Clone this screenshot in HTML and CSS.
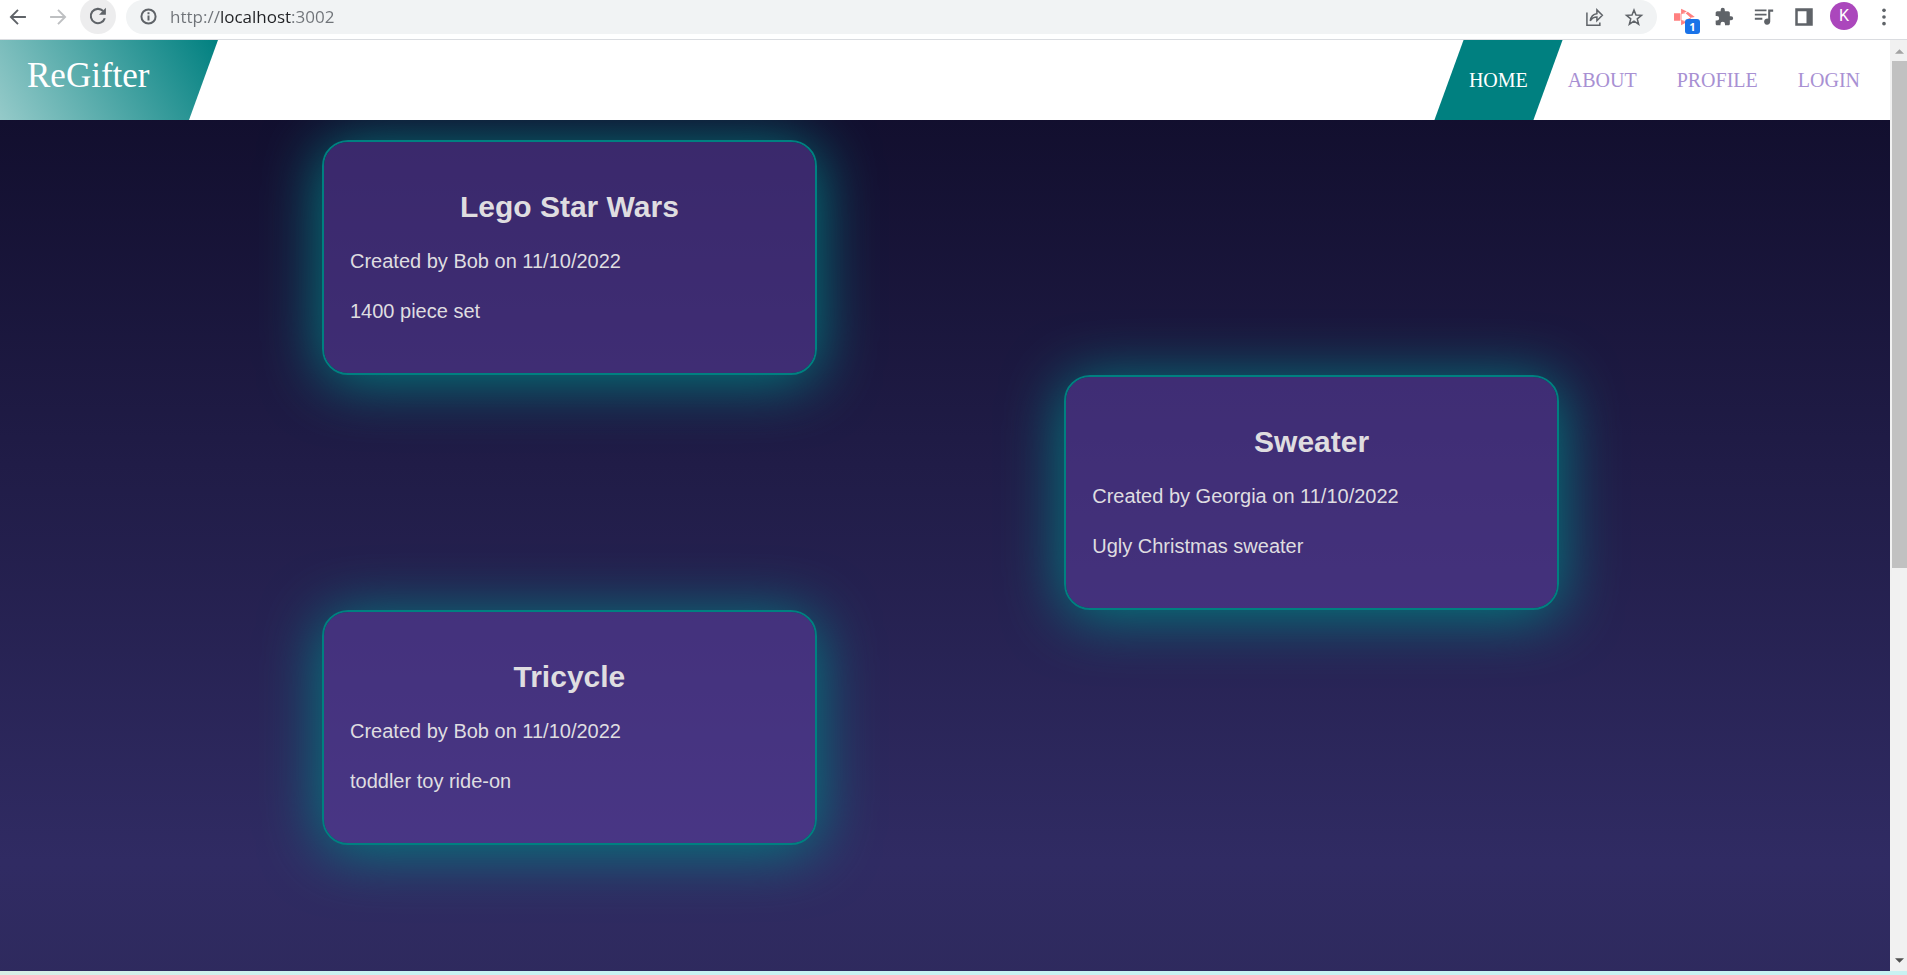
FILE: index.html
```
<!DOCTYPE html>
<html lang="en">
<head>
<meta charset="utf-8">
<title>ReGifter</title>
<link rel="stylesheet" href="styles.css">
</head>
<body>
<div class="toolbar">
  <div class="nav-buttons">
    <button class="tool" aria-label="Back"><svg viewBox="0 0 24 24"><path d="M21.500 12H4M12 3.500 3.500 12l8.500 8.500" class="line"/></svg></button>
    <button class="tool tool-off" aria-label="Forward"><svg viewBox="0 0 24 24"><path d="M2.500 12H20M12 3.500 20.500 12 12 20.500" class="line"/></svg></button>
    <button class="tool tool-round" aria-label="Reload"><svg viewBox="0 0 24 24"><path d="M19.400 14.400A7.800 7.800 0 1 1 17.600 6.600" class="line"/><path d="M20.600 3v7.500h-7.500z"/></svg></button>
  </div>
  <div class="address">
    <button class="tool tool-small" aria-label="Site information"><svg viewBox="0 0 24 24"><circle cx="12" cy="12" r="10" class="line thick"/><path d="M10.600 10.500h2.800V17.500h-2.800zM10.600 6h2.800v2.800h-2.800z"/></svg></button>
    <input class="url" type="text" aria-label="Address" value="http://localhost:3002">
    <button class="tool" aria-label="Share"><svg viewBox="0 0 24 24"><path d="M3.500 6.500v15.500H19V18.500" class="line thin"/><path d="M7.500 16.500C8.300 11 11 8.500 15.500 8V3.500l6.500 6.500-6.500 6.500v-4.500C12 12 9.500 13.500 7.500 16.500z" class="line thin"/></svg></button>
    <button class="tool" aria-label="Bookmark"><svg viewBox="0 0 24 24"><path d="m12 3.500 2.400 6 6.600.5-5.100 4.200 1.700 6.500L12 17l-5.600 3.700 1.700-6.500L3 10l6.600-.5z" class="line thin"/></svg></button>
  </div>
  <div class="extensions">
    <button class="tool recorder" aria-label="Recorder"><svg viewBox="0 0 24 24"><path d="M0 7.500h7.500v9H0zM8.500 2l7 3.500-7 2.500zM8.500 16l6 2.500-6 3.500zM14 7.500l2.500-1.800L25 12l-5 .8zM16 14.500l4.500-2-2 4.500z" fill="#ff8080"/><path d="M8.500 8v8l5 1.500M8.500 8l5-1" fill="none" stroke="#ff8080" stroke-width="1"/></svg><span class="badge">1</span></button>
    <button class="tool" aria-label="Extensions"><svg viewBox="0 0 24 24"><path d="M20.500 11H19V7c0-1.100-.9-2-2-2h-4V3.500a2.500 2.500 0 0 0-5 0V5H4c-1.100 0-2 .9-2 2v3.800h1.500a2.700 2.700 0 0 1 0 5.400H2V20c0 1.100.9 2 2 2h3.800v-1.500a2.700 2.700 0 0 1 5.400 0V22H17c1.100 0 2-.9 2-2v-4h1.500a2.500 2.500 0 0 0 0-5z"/></svg></button>
    <button class="tool" aria-label="Media"><svg viewBox="0 0 24 24"><path d="M1 3h14v2.200H1zM1 8h14v2.200H1zM1 13h9v2.200H1z"/><path d="M17 3h6v2.600h-3.500V17.500a3.700 3.700 0 1 1-2.500-3.500z"/></svg></button>
    <button class="tool" aria-label="Side panel"><svg viewBox="0 0 24 24"><path d="M1.500 1.500h21v21h-21zM4.500 5v14.500H15V5z" fill-rule="evenodd"/></svg></button>
    <button class="avatar" aria-label="Profile K">K</button>
    <button class="tool" aria-label="Menu"><svg viewBox="0 0 24 24"><circle cx="12" cy="4" r="2.200"/><circle cx="12" cy="12" r="2.200"/><circle cx="12" cy="20" r="2.200"/></svg></button>
  </div>
</div>
<div class="viewport">
  <div class="page">
    <header class="site-header">
      <a class="logo" href="#">ReGifter</a>
      <nav class="menu">
        <a class="menu-link active" href="#">HOME</a>
        <a class="menu-link" href="#">ABOUT</a>
        <a class="menu-link" href="#">PROFILE</a>
        <a class="menu-link" href="#">LOGIN</a>
      </nav>
    </header>
    <main class="gifts">
      <article class="gift">
        <h2>Lego Star Wars</h2>
        <p>Created by Bob on 11/10/2022</p>
        <p>1400 piece set</p>
      </article>
      <article class="gift">
        <h2>Sweater</h2>
        <p>Created by Georgia on 11/10/2022</p>
        <p>Ugly Christmas sweater</p>
      </article>
      <article class="gift">
        <h2>Tricycle</h2>
        <p>Created by Bob on 11/10/2022</p>
        <p>toddler toy ride-on</p>
      </article>
    </main>
  </div>
  <div class="scrollbar" aria-hidden="true">
    <svg class="arrow arrow-up" viewBox="0 0 10 5"><path d="M0 5 5 0l5 5z"/></svg>
    <div class="track"><div class="thumb"></div></div>
    <svg class="arrow" viewBox="0 0 10 5"><path d="M0 0h10L5 5z"/></svg>
  </div>
</div>
<div class="desktop-edge"></div>
</body>
</html>
```
FILE: styles.css
```
* { box-sizing: border-box; }
body {
  margin: 0;
  height: 100vh;
  display: flex;
  flex-direction: column;
  overflow: hidden;
  background: #fff;
}
button { border: 0; padding: 0; background: none; cursor: pointer; }

/* Browser toolbar */
.toolbar {
  height: 40px;
  flex: none;
  display: flex;
  align-items: flex-start;
  border-bottom: 1px solid #dadce0;
}
.nav-buttons { display: flex; gap: 4px; }
.tool {
  width: 36px;
  height: 33px;
  display: flex;
  align-items: center;
  justify-content: center;
  position: relative;
}
.tool svg { width: 20px; height: 20px; fill: #5f6368; overflow: visible; }
.tool .line { fill: none; stroke: #5f6368; stroke-width: 2.300; }
.tool .thick { stroke-width: 2.800; }
.tool .thin { stroke-width: 1.800; }
.tool-off { opacity: 0.400; }
.tool-round { height: 36px; margin-top: -2px; border-radius: 50%; background: #ededee; }
.tool-round svg { width: 22px; height: 22px; }
.tool-small svg { width: 17px; height: 17px; }
.address {
  flex: 1;
  height: 34px;
  margin: 0 9px 0 10px;
  padding: 0 5px 0 4px;
  display: flex;
  gap: 4px;
  border-radius: 17px;
  background: #f1f3f4;
}
.url {
  flex: 1;
  min-width: 0;
  height: 33px;
  border: 0;
  padding: 0;
  font: 17px/33px "Open Sans", "Noto Sans", sans-serif;
  color: transparent;
  background: linear-gradient(to right, #6f7378 50px, #202124 50px 121px, #6f7378 121px);
  -webkit-background-clip: text;
  background-clip: text;
}
.extensions { display: flex; gap: 4px; padding-right: 5px; }
.badge {
  position: absolute;
  right: 2px;
  bottom: -1px;
  width: 15px;
  height: 15px;
  border-radius: 3px;
  background: #1a73e8;
  color: #fff;
  font: bold 11px/15px "Open Sans", sans-serif;
  text-align: center;
}
.avatar {
  width: 28px;
  height: 28px;
  margin: 2px 4px;
  border-radius: 50%;
  background: #ab47bc;
  color: #fff;
  font: 16px/28px Roboto, sans-serif;
}

/* Page */
.viewport { flex: 1; min-height: 0; display: flex; }
.page {
  flex: 1;
  min-width: 0;
  display: flex;
  flex-direction: column;
}
.site-header {
  position: relative;
  z-index: 1;
  flex: none;
  height: 80px;
  display: flex;
  justify-content: space-between;
  background: #fff;
  font-family: "Liberation Serif", serif;
}
.logo {
  width: 218px;
  padding-left: 27px;
  font-size: 35px;
  line-height: 71px;
  color: #fff;
  text-decoration: none;
  background: linear-gradient(60deg, #95cac9, #008080);
  clip-path: polygon(0 0, 100% 0, calc(100% - 29px) 100%, 0 100%);
}
.menu { display: flex; padding-right: 10px; }
.menu-link {
  position: relative;
  padding: 0 20px;
  font-size: 20px;
  line-height: 81px;
  color: #a890d3;
  text-decoration: none;
}
.active { color: #fff; }
.active::before {
  content: "";
  position: absolute;
  inset: 0;
  z-index: -1;
  background: #008080;
  transform: skewX(-20deg);
}
.gifts {
  flex: 1;
  min-height: 0;
  overflow: hidden;
  display: grid;
  grid-template-columns: 2fr 1fr 2fr;
  align-content: start;
  padding: 20px 331px 0 322px;
  background: linear-gradient(to bottom, #0f0c29, #302b63, #24243e) 0 -80px / 100% 1644px;
}
.gift {
  grid-column: 1;
  padding: 48px 26px;
  border: 2px solid #008080;
  border-radius: 26px;
  background: rgba(98, 65, 168, 0.500);
  background-clip: padding-box;
  box-shadow: 0 6px 60px #008080;
  color: #dfdde0;
  font-family: "Liberation Sans", Arial, sans-serif;
}
.gift:nth-child(1) { grid-row: 1; }
.gift:nth-child(2) { grid-row: 2; grid-column: 3; }
.gift:nth-child(3) { grid-row: 3; }
.gift h2 {
  margin: 0 0 23px;
  font-size: 30px;
  line-height: 34px;
  text-align: center;
}
.gift p { margin: 0 0 22px; font-size: 20px; line-height: 28px; }
.gift p:last-child { margin: 0; }

/* Scrollbar */
.scrollbar {
  width: 17px;
  flex: none;
  display: flex;
  flex-direction: column;
  align-items: center;
  gap: 7px;
  padding: 9px 0 8px 2px;
  background: #f1f1f1;
}
.arrow { width: 9px; height: 5px; fill: #505050; flex: none; }
.arrow-up { fill: #a3a3a3; }
.track { flex: 1; align-self: stretch; }
.thumb { height: 57%; background: #c1c1c1; }
.desktop-edge { flex: none; height: 4px; background: linear-gradient(to right, #d8efe6, #c8f2f2 20%); }
```
